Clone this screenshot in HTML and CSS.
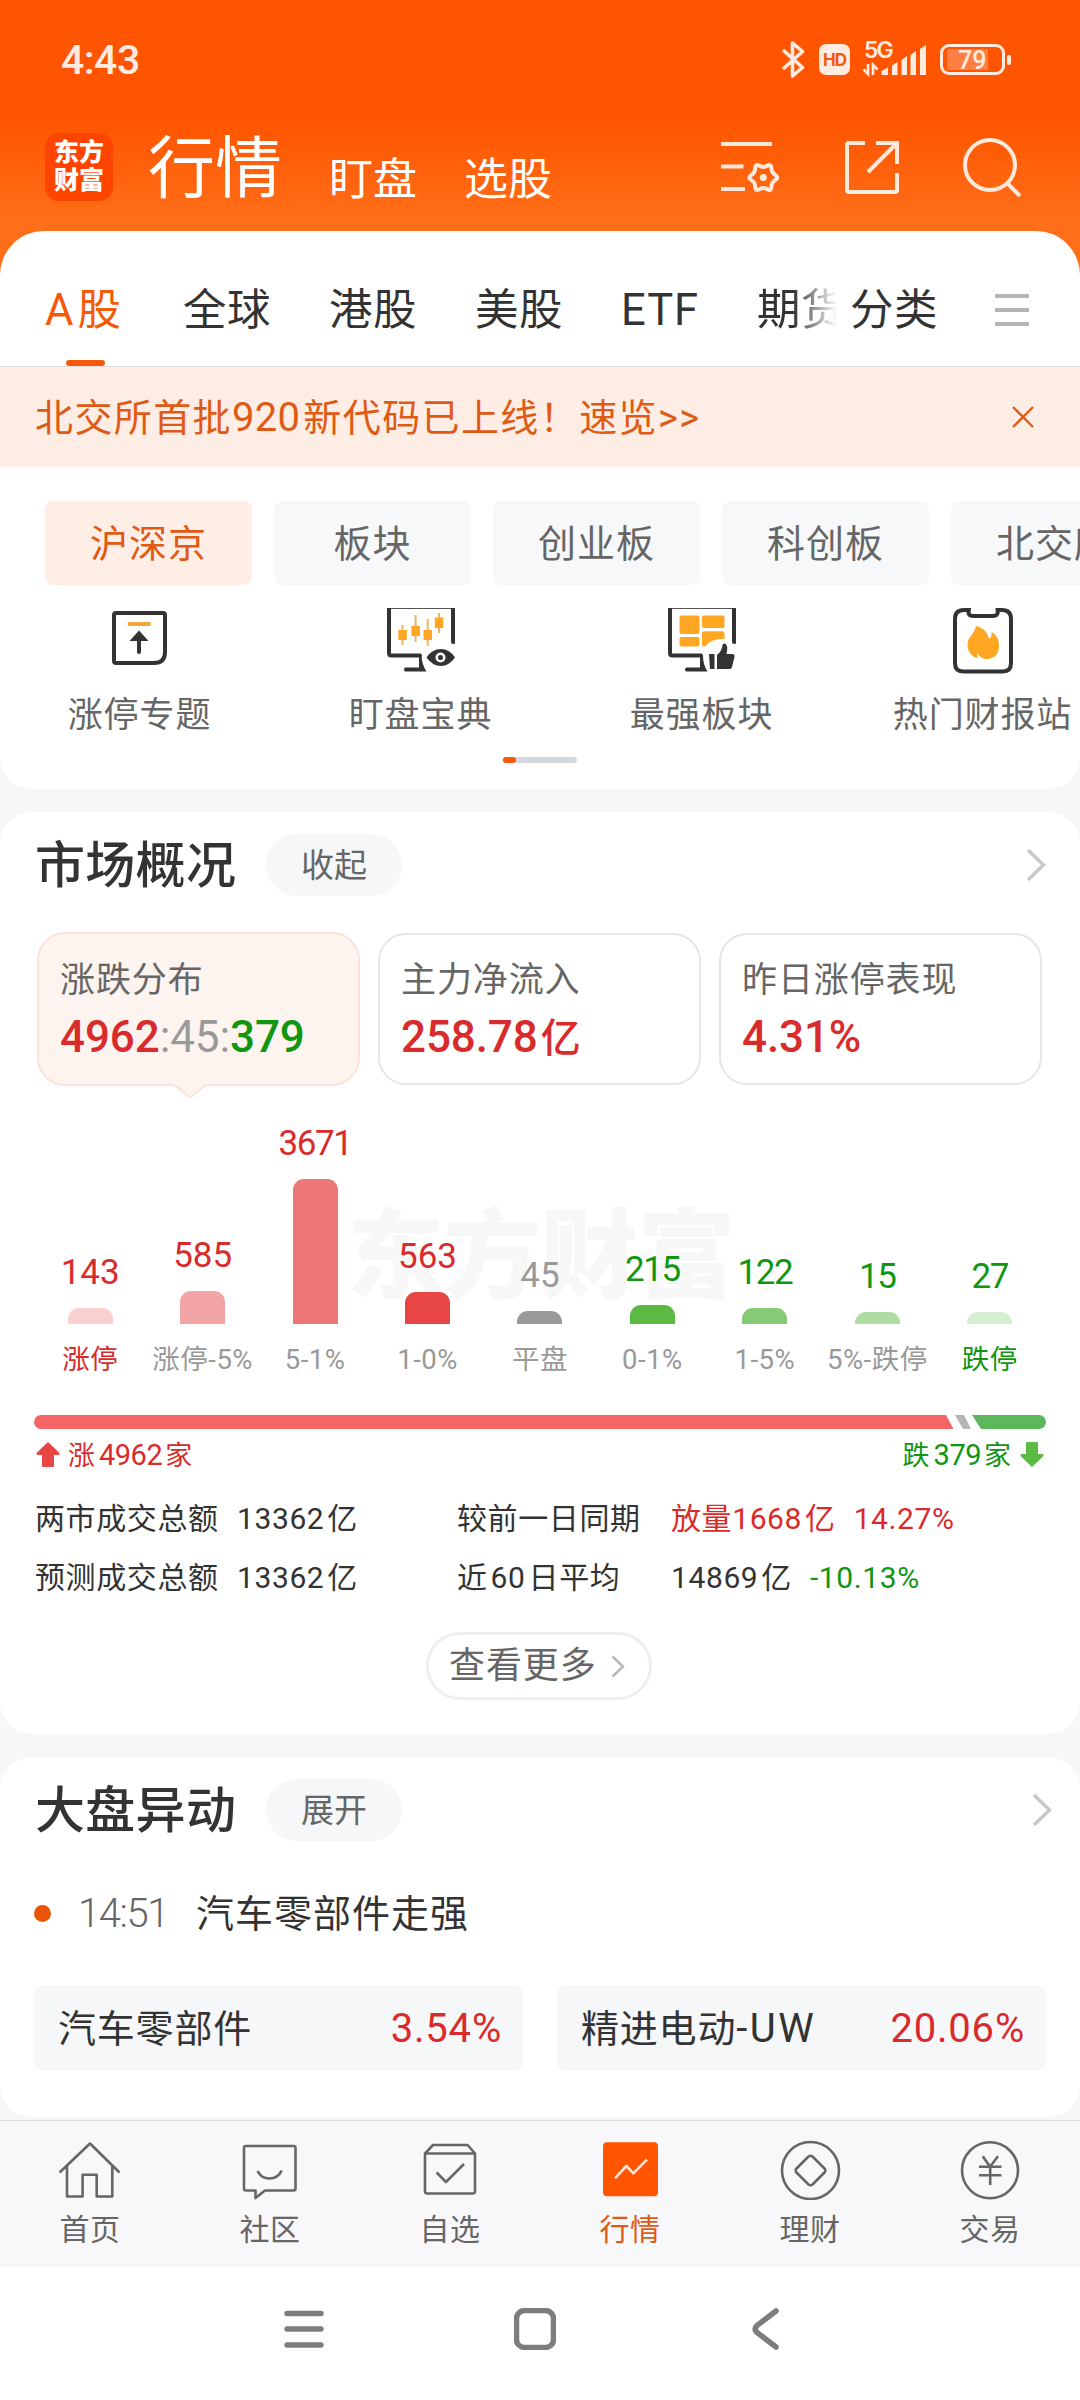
FILE: index.html
```html
<!doctype html>
<html lang="zh-CN">
<head>
    <meta charset="utf-8">
    <title>行情</title>
    <link rel="stylesheet" href="styles.css">
</head>
<body>

<header class="top">
    <div class="status-bar">
        <span class="clock">4:43</span>
        <svg class="bluetooth" width="24" height="39" viewBox="0 0 24 39"><path d="M2 10L21.500 27.500L11.500 36V3L21.500 11.500L2 29"/></svg>
        <span class="hd">HD</span>
        <svg class="signal" width="64" height="40" viewBox="0 -4 64 40">
            <text x="1" y="17">5G</text>
            <path d="M18.500 34V30L25 26.500V34ZM29 34V24.500L34.500 21V34ZM38.500 34V19L44 15V34ZM47.500 34V14L53 10V34ZM57 34V8L63 4V34Z"/>
            <path class="data" d="M5 23V33L0.500 28.500M10 34V24L14.500 28.500"/>
        </svg>
        <span class="battery"><i></i><b>79</b></span>
        <span class="battery-tip"></span>
    </div>
    <div class="title-bar">
        <div class="logo">东方<br>财富</div>
        <span class="title-main">行情</span>
        <span class="title-sub">盯盘</span>
        <span class="title-sub">选股</span>
        <div class="title-icons">
            <svg width="60" height="58" viewBox="0 0 60 58">
                <path d="M0 5H51M0 27.500H22.500M0 50H24"/>
                <g transform="translate(42.3 38.500)">
                    <path d="M12.100 2.400Q8.200 4.750 8.100 9.300Q8 13.900 4 11.700Q0 9.500 -4 11.700Q-8 13.900 -8.100 9.300Q-8.200 4.750 -12.100 2.400Q-16 0 -12.100 -2.400Q-8.200 -4.750 -8.100 -9.300Q-8 -13.900 -4 -11.700Q0 -9.500 4 -11.700Q8 -13.900 8.100 -9.300Q8.200 -4.750 12.100 -2.400Q16 0 12.100 2.400Z"/>
                    <circle class="dot" r="3.500"/>
                </g>
            </svg>
            <svg width="54" height="54" viewBox="0 0 54 54"><path d="M20 2H4Q2 2 2 4V49Q2 51 4 51H50Q52 51 52 49V32M31 2H52V23M51 3L23 31"/></svg>
            <svg width="60" height="60" viewBox="0 0 60 60"><circle cx="27" cy="27" r="25"/><path d="M44 45L57 58"/></svg>
        </div>
    </div>
</header>

<section class="card card-first">
    <nav class="tabs">
        <span class="tab active">A股</span>
        <span class="tab">全球</span>
        <span class="tab">港股</span>
        <span class="tab">美股</span>
        <span class="tab tab-etf">ETF</span>
        <span class="tab tab-fade">期货</span>
        <span class="tab tab-sort">分类</span>
        <span class="tabs-menu"><i></i><i></i><i></i></span>
    </nav>

    <div class="notice">
        <span>北交所首批<em>920</em>新代码已上线！速览&gt;&gt;</span>
        <svg width="22" height="22" viewBox="0 0 22 22"><path d="M1 1L21 21M21 1L1 21"/></svg>
    </div>

    <div class="chips">
        <span class="chip active">沪深京</span>
        <span class="chip">板块</span>
        <span class="chip">创业板</span>
        <span class="chip">科创板</span>
        <span class="chip">北交所</span>
    </div>

    <div class="shortcuts">
        <div class="shortcut">
            <svg width="55" height="66" viewBox="0 -3 55 66">
                <path class="line" d="M4 2H51Q53 2 53 4V41Q53 52 42 52H4Q2 52 2 50V4Q2 2 4 2Z"/>
                <path class="orange-line" d="M17.500 13H37"/>
                <path class="line" d="M27 26V41"/>
                <path class="solid" d="M27 19.500L36.500 30H17.500Z"/>
            </svg>
            <span>涨停专题</span>
        </div>
        <div class="shortcut">
            <svg width="68" height="66" viewBox="0 0 68 66">
                <path class="thin" d="M0 0.500H68"/>
                <path class="line" d="M2 0V45Q2 47.500 4.500 47.500H33M66 0V34"/>
                <path class="solid" d="M32 48H34.500Q35 57 39.500 63.500H18Q16 61.500 18 59.500H32ZM64 33L68 36V32Z"/>
                <path class="wick" d="M15.500 17V37M28.600 7V34M40.700 11V38M52 5V25"/>
                <path class="orange" d="M11.300 22h8.500v10h-8.500zM24.400 18h8.500v10h-8.500zM36.500 22h8.500v10h-8.500zM47.800 9.500h8.500v10.500h-8.500z"/>
                <path class="solid" d="M39.500 49.500Q45 41 53.800 41T68 49.500Q62 58 53.800 58T39.500 49.500Z"/>
                <circle cx="53.500" cy="49.500" r="5" fill="#fff"/>
                <circle cx="53.500" cy="49.500" r="2.500" class="solid"/>
            </svg>
            <span>盯盘宝典</span>
        </div>
        <div class="shortcut">
            <svg width="68" height="66" viewBox="0 0 68 66">
                <path class="thin" d="M0 0.500H68"/>
                <path class="line" d="M2 0V45Q2 47.500 4.500 47.500H33M66 0V34"/>
                <path class="solid" d="M32 48H35Q35 57 39.500 63.500H18Q16 61.500 18 59.500H32Z"/>
                <g class="orange">
                    <rect x="11.500" y="7.500" width="20" height="18.500" rx="2"/>
                    <rect x="34" y="7.500" width="22.500" height="12.500" rx="2"/>
                    <rect x="11.500" y="29" width="20" height="9.500" rx="2"/>
                    <path d="M36 23.300H54.500Q56.500 23.300 56.500 25V31Q43 30 37 38.500H36Q34 38.500 34 36.500V25.500Q34 23.300 36 23.300Z"/>
                </g>
                <path class="solid" d="M41 46H46.500V61H42ZM49 47Q54 43 54.500 37Q55 35 57 35.500Q60.500 37 58.500 46H64Q67 46 66.500 49L64 59Q63.500 61 62 61H49ZM64 33L68 36V32Z"/>
            </svg>
            <span>最强板块</span>
        </div>
        <div class="shortcut">
            <svg width="60" height="66" viewBox="0 0 60 66">
                <path class="line" d="M16 1Q14 8 20 8H40Q46 8 44.500 1M16 2H11Q2 2 2 11V55Q2 63.500 10 63.500H50Q58 63.500 58 55V11Q58 2 49 2H44.500"/>
                <path class="orange" d="M23 18C32 20 35 26 36 31C38 30 39 28 38.500 24C44 27 46 32 46 38C46 46 41 51 34 51C30 51 26 49 25 45C24 47 24 49 24.500 50.500C18 48 14.500 43 14.500 37C14.500 28 22 26 23 18Z"/>
            </svg>
            <span>热门财报站</span>
        </div>
    </div>
    <div class="pager"><i></i></div>
</section>

<section class="card card-market">
    <div class="card-head">
        <h2>市场概况</h2>
        <span class="pill">收起</span>
        <svg class="more" width="20" height="34" viewBox="0 0 20 34"><path d="M2 2L17.500 17L2 32"/></svg>
    </div>

    <div class="boxes">
        <div class="box active">
            <span class="box-label">涨跌分布</span>
            <span class="box-value"><span class="red">4962</span><span class="flat">:45:</span><span class="green">379</span></span>
            <svg class="pointer" width="38" height="15" viewBox="0 0 38 15"><path d="M0 0H38V2Q34 2 31 5L21.500 13Q19 15 16.500 13L7 5Q4 2 0 2Z" fill="#f9e3d8"/><path d="M1 0H37Q33 0 30 3L20.500 11.500Q19 13 17.500 11.500L8 3Q5 0 1 0Z" fill="#fef4ef"/></svg>
        </div>
        <div class="box">
            <span class="box-label">主力净流入</span>
            <span class="box-value red">258.78<em>亿</em></span>
        </div>
        <div class="box">
            <span class="box-label">昨日涨停表现</span>
            <span class="box-value red">4.31%</span>
        </div>
    </div>

    <div class="chart">
        <div class="watermark">东方财富</div>
        <div class="col"><b class="red">143</b><i class="bar bar-1" style="height:16px"></i><span class="red">涨停</span></div>
        <div class="col"><b class="red">585</b><i class="bar bar-2" style="height:33px"></i><span>涨停-5%</span></div>
        <div class="col"><b class="red tight">3671</b><i class="bar bar-3" style="height:145px"></i><span>5-1%</span></div>
        <div class="col"><b class="red">563</b><i class="bar bar-4" style="height:32px"></i><span>1-0%</span></div>
        <div class="col"><b class="flat">45</b><i class="bar bar-5" style="height:13px"></i><span>平盘</span></div>
        <div class="col"><b class="green tight">215</b><i class="bar bar-6" style="height:19px"></i><span>0-1%</span></div>
        <div class="col"><b class="green tight">122</b><i class="bar bar-7" style="height:16px"></i><span>1-5%</span></div>
        <div class="col"><b class="green tight">15</b><i class="bar bar-8" style="height:12px"></i><span>5%-跌停</span></div>
        <div class="col"><b class="green tight">27</b><i class="bar bar-9" style="height:12px"></i><span class="green">跌停</span></div>
    </div>

    <svg class="ratio" width="1012" height="14" viewBox="0 0 1012 14">
        <path d="M7 0H912L919.500 14H7A7 7 0 0 1 7 0Z" fill="#f66565"/>
        <path d="M921 0H930L937 14H929Z" fill="#b5b5b5"/>
        <path d="M938 0H1005A7 7 0 0 1 1005 14H947Z" fill="#5cb85c"/>
    </svg>
    <div class="ratio-text">
        <svg width="24" height="26" viewBox="0 0 24 26"><path d="M12 0L23.500 11Q24 13 22 13H18V24Q18 25 17 25H7Q6 25 6 24V13H2Q0 13 0.500 11Z" fill="#e84545"/></svg>
        <span class="red">涨<em>4962</em>家</span>
        <span class="green fall">跌<em>379</em>家</span>
        <svg width="24" height="26" viewBox="0 0 24 26"><path d="M12 25L23.500 14Q24 12 22 12H18V1Q18 0 17 0H7Q6 0 6 1V12H2Q0 12 0.500 14Z" fill="#5cb944"/></svg>
    </div>

    <div class="stats">
        <span>两市成交总额</span><span>13362<em>亿</em></span><span>较前一日同期</span>
        <span class="red">放量1668<em>亿</em><b>14.27%</b></span>
        <span>预测成交总额</span><span>13362<em>亿</em></span><span>近<em>60</em><em>日平均</em></span>
        <span>14869<em>亿</em><b class="green">-10.13%</b></span>
    </div>

    <div class="view-more">
        <span>查看更多</span>
        <svg width="14" height="23" viewBox="0 0 14 23"><path d="M1.500 1.500L12 11.500L1.500 21.500"/></svg>
    </div>
</section>

<section class="card card-moves">
    <div class="card-head">
        <h2>大盘异动</h2>
        <span class="pill">展开</span>
        <svg class="more" width="20" height="34" viewBox="0 0 20 34"><path d="M2 2L17.500 17L2 32"/></svg>
    </div>
    <div class="event">
        <i></i>
        <span class="event-time">14:51</span>
        <span>汽车零部件走强</span>
    </div>
    <div class="stocks">
        <div class="stock"><span>汽车零部件</span><b>3.54%</b></div>
        <div class="stock"><span>精进电动<em>-UW</em></span><b>20.06%</b></div>
    </div>
</section>

<nav class="bottom-nav">
    <div class="nav-item">
        <svg width="64" height="60" viewBox="0 0 64 60"><path d="M1.600 32.500L32 3.500L61.500 32.500M9 26.500V56.500H24.600V34.700H38.700V56.500H54.300V26.500"/></svg>
        <span>首页</span>
    </div>
    <div class="nav-item">
        <svg width="64" height="60" viewBox="0 0 64 60"><path d="M8 6H55.500Q57.500 6 57.500 8V48.500Q57.500 50.500 55.500 50.500H27L17.500 58V50.500H8Q6 50.500 6 48.500V8Q6 6 8 6Z"/><path d="M19.600 31Q23 38.500 31.500 38.500T43.700 30.500"/></svg>
        <span>社区</span>
    </div>
    <div class="nav-item">
        <svg width="64" height="60" viewBox="0 0 64 60"><path d="M7 13.500L15 5H49.600L57 13.500V51Q57 53.500 54.500 53.500H9.500Q7 53.500 7 51ZM7 13.500H57M18.600 32.500L28 42L46 24"/></svg>
        <span>自选</span>
    </div>
    <div class="nav-item active">
        <svg width="64" height="60" viewBox="0 0 64 60"><rect x="5" y="2.300" width="55" height="54" rx="4"/><path d="M17 38.300L28.400 26L35.300 33.300L49 19.700"/></svg>
        <span>行情</span>
    </div>
    <div class="nav-item">
        <svg width="64" height="60" viewBox="0 0 64 60"><circle cx="32.500" cy="30.500" r="28.500"/><path d="M34.500 16.500L47 29Q48 30.500 47 32L34.500 44.500Q32.500 46 30.500 44.500L18 32Q17 30.500 18 29L30.500 16.500Q32.500 15 34.500 16.500Z"/></svg>
        <span>理财</span>
    </div>
    <div class="nav-item">
        <svg width="64" height="60" viewBox="0 0 64 60"><circle cx="32" cy="30.300" r="28"/><path d="M24.800 16.300L32 26.700L40 16.300M21 26.700H43.500M21 35.300H43.500M32.200 26.700V45"/></svg>
        <span>交易</span>
    </div>
</nav>

<div class="system-nav">
    <svg width="40" height="42" viewBox="0 0 40 42"><path d="M3 5.500H37M3 21H37M3 37H37"/></svg>
    <svg width="42" height="42" viewBox="0 0 42 42"><rect x="2.500" y="2.500" width="37" height="37" rx="8"/></svg>
    <svg width="28" height="42" viewBox="0 0 28 42"><path d="M24 3L5 17.500Q1.500 21 5 24.500L24 39"/></svg>
</div>

</body>
</html>
```

FILE: styles.css
```css
* {
    box-sizing: border-box;
}

body {
    margin: 0;
    width: 1080px;
    height: 2400px;
    overflow: hidden;
    font-family: Roboto, "Noto Sans CJK SC", sans-serif;
    background-color: #f6f7f9;
    color: #333333;
    line-height: 1;
    white-space: nowrap;
}

em, i {
    font-style: normal;
}

b {
    font-weight: normal;
}

svg {
    display: block;
    flex: none;
}

.red { color: #d92b2b; }
.green { color: #109610; }
.flat { color: #999999; }

/* Orange header */
.top {
    height: 275px;
    background: linear-gradient(#ff5500 120px, #ff6f1a 225px);
}

.status-bar {
    display: flex;
    align-items: center;
    height: 119px;
    padding-left: 61px;
    color: #ffebe0;
}

.clock {
    width: 720px;
    padding-top: 2px;
    font-size: 41px;
    font-weight: 500;
    letter-spacing: -0.5px;
}

.bluetooth path {
    fill: none;
    stroke: #ffebe0;
    stroke-width: 3.6;
    stroke-linejoin: round;
}

.hd {
    width: 31px;
    height: 31px;
    margin-left: 14px;
    border-radius: 7px;
    background-color: #ffebe0;
    color: #f25a10;
    font: 700 17px/32px Inter, sans-serif;
    letter-spacing: -1px;
    text-align: center;
}

.signal {
    margin-left: 13px;
    margin-top: -5px;
    fill: #ffebe0;
}

.signal text {
    font: 600 23px Inter, sans-serif;
    letter-spacing: -2px;
}

.signal .data {
    fill: none;
    stroke: #ffebe0;
    stroke-width: 2.6;
}

.battery {
    display: flex;
    width: 65px;
    height: 31px;
    margin-left: 13px;
    padding: 2px 4px;
    border: 3px solid #ffebe0;
    border-radius: 9px;
}

.battery i {
    width: 41px;
    background-color: #ff7f42;
    border-radius: 2px 0 0 2px;
}

.battery b {
    margin-left: -30px;
    font: 500 25px/23px Roboto, sans-serif;
}

.battery-tip {
    width: 4px;
    height: 10px;
    margin-left: 2px;
    border-radius: 2px;
    background-color: #ffebe0;
}

.title-bar {
    display: flex;
    height: 112px;
    padding-left: 45px;
    color: #ffffff;
}

.logo {
    width: 68px;
    height: 68px;
    margin-top: 14px;
    border-radius: 14px;
    background-color: #ff4400;
    font-size: 25px;
    font-weight: 900;
    line-height: 28px;
    padding-top: 6px;
    text-align: center;
}

.title-main {
    margin-left: 35px;
    font-size: 67px;
    line-height: 66px;
    margin-top: 17px;
}

.title-sub {
    margin-left: 47px;
    font-size: 44px;
    line-height: 44px;
    margin-top: 39px;
}

.title-icons {
    display: flex;
    align-items: center;
    gap: 64px;
    height: 60px;
    margin: 19px 0 0 169px;
}

.title-icons svg {
    fill: none;
    stroke: #ffe9dc;
    stroke-width: 4;
}

.title-icons .dot {
    fill: #ffe9dc;
    stroke: none;
}

/* Cards */
.card {
    background-color: #ffffff;
    border-radius: 32px;
    overflow: hidden;
}

.card-first {
    height: 558px;
    margin-top: -44px;
    border-radius: 44px 44px 32px 32px;
}

.tabs {
    display: flex;
    align-items: center;
    height: 136px;
    padding: 22px 0 0 45px;
    border-bottom: 1px solid #dddddd;
    font-size: 43.5px;
}

.tab {
    display: flex;
    align-items: center;
    height: 113px;
    margin-right: 58px;
    padding-top: 3px;
    letter-spacing: 0.5px;
}

.tab.active {
    position: relative;
    width: 80px;
    letter-spacing: 4px;
    color: #f5590a;
}

.tab.active::after {
    content: "";
    position: absolute;
    left: 21px;
    bottom: 0;
    width: 39px;
    height: 6px;
    border-radius: 3px;
    background-color: #f5590a;
}

.tab-etf {
    width: 78px;
    letter-spacing: 1px;
}

.tab-fade {
    width: 80px;
    margin-right: 13px;
    overflow: hidden;
    -webkit-mask-image: linear-gradient(90deg, #000 45%, transparent);
    mask-image: linear-gradient(90deg, #000 45%, transparent);
}

.tab-sort {
    margin-right: 57px;
}

.tabs-menu {
    display: grid;
    gap: 10px;
}

.tabs-menu i {
    width: 34px;
    height: 4px;
    border-radius: 1px;
    background-color: #b4b4b4;
}

.notice {
    display: flex;
    align-items: center;
    justify-content: space-between;
    height: 100px;
    padding: 0 46px 0 35px;
    background-color: #fdede4;
    color: #df5a14;
    font-size: 38px;
    letter-spacing: 1.4px;
}

.notice span {
    padding-top: 2px;
}

.notice em {
    margin-right: 3px;
    font-size: 40px;
    letter-spacing: 0.3px;
}

.notice svg {
    fill: none;
    stroke: #df5a14;
    stroke-width: 2.4;
}

.chips {
    display: flex;
    gap: 22px;
    padding: 34px 0 0 45px;
}

.chip {
    flex: none;
    width: 207px;
    height: 84px;
    border-radius: 8px;
    background-color: #f7f8fa;
    color: #666666;
    font-size: 38px;
    line-height: 86px;
    letter-spacing: 1px;
    text-align: center;
}

.chip:nth-child(2) {
    width: 197px;
}

.chip.active {
    background-color: #ffeee6;
    color: #df5a14;
}

.shortcuts {
    display: grid;
    grid-template-columns: repeat(4, 281px);
    width: 1124px;
    margin: 23px 0 0 -1px;
}

.shortcut {
    display: grid;
    justify-items: center;
    row-gap: 24px;
    color: #666666;
    font-size: 35px;
    line-height: 36px;
    letter-spacing: 0.9px;
}

.shortcut .line {
    fill: none;
    stroke: #333333;
    stroke-width: 4;
    stroke-linecap: round;
}

.shortcut .thin {
    stroke: #555555;
    stroke-width: 1;
}

.shortcut .solid { fill: #333333; }
.shortcut .orange { fill: #ffa622; }

.shortcut .orange-line {
    stroke: #f5a638;
    stroke-width: 4;
    stroke-linecap: round;
}

.shortcut .wick {
    stroke: #f3b35c;
    stroke-width: 2;
}

.pager {
    width: 74px;
    height: 6px;
    margin: 23px 0 0 503px;
    border-radius: 3px;
    background-color: #d5d9dc;
}

.pager i {
    display: block;
    width: 13px;
    height: 6px;
    border-radius: 3px;
    background-color: #f5590a;
}

/* Card headings */
.card-head {
    display: flex;
    align-items: center;
    height: 106px;
    padding: 0 34px 0 35px;
}

.card-head h2 {
    width: 231px;
    margin: 0;
    padding-top: 2px;
    font-size: 50px;
    font-weight: 500;
    letter-spacing: 0.3px;
}

.pill {
    width: 136px;
    height: 62px;
    border-radius: 31px;
    background-color: #f6f7f9;
    color: #666666;
    font-size: 33px;
    line-height: 63px;
    text-align: center;
}

.more {
    margin-left: auto;
    fill: none;
    stroke: #c8c8c8;
    stroke-width: 3.5;
}

/* Market overview */
.card-market {
    height: 922px;
    margin-top: 23px;
}

.boxes {
    display: grid;
    grid-template-columns: 323px 323px 323px;
    gap: 18px;
    padding: 14px 0 0 37px;
}

.box {
    position: relative;
    display: flex;
    flex-direction: column;
    height: 152px;
    margin-top: 1px;
    padding: 28px 0 0 21px;
    border: 2px solid #e6e6e6;
    border-radius: 28px;
}

.box.active {
    height: 154px;
    margin-top: 0;
    padding-top: 29px;
    border-color: #f9e3d8;
    background-color: #fef4ef;
}

.box-label {
    color: #666666;
    font-size: 35px;
    line-height: 36px;
    letter-spacing: 0.9px;
}

.box-value {
    margin-top: 16px;
    font-size: 44px;
    font-weight: 500;
    line-height: 44px;
    letter-spacing: -0.1px;
}

.box-value .flat {
    font-weight: 400;
}

.box-value em {
    margin-left: 3px;
    font-size: 40px;
}

.pointer {
    position: absolute;
    left: 132px;
    bottom: -15px;
}

.chart {
    position: relative;
    display: grid;
    grid-template-columns: repeat(9, 1fr);
    align-items: end;
    width: 1012px;
    height: 264px;
    margin: 24px 0 0 34px;
}

.watermark {
    position: absolute;
    left: 313px;
    bottom: 65px;
    font-size: 97px;
    font-weight: 900;
    line-height: 104px;
    color: #f7f7f7;
}

.col {
    position: relative;
    display: flex;
    flex-direction: column;
    align-items: center;
}

.col b {
    margin-bottom: 17px;
    font-size: 35px;
    line-height: 36px;
}

.col .tight {
    letter-spacing: -1.4px;
}

.bar {
    width: 45px;
    border-radius: 11px 11px 0 0;
}

.bar-1 { background-color: #f9d1d1; }
.bar-2 { background-color: #f3a5a5; }
.bar-3 { background-color: #ed7777; }
.bar-4 { background-color: #e84545; }
.bar-5 { background-color: #999999; }
.bar-6 { background-color: #5cb944; }
.bar-7 { background-color: #85ca75; }
.bar-8 { background-color: #aedca2; }
.bar-9 { background-color: #d6eed1; }

.col span {
    margin-top: 21px;
    font-size: 27.5px;
    line-height: 30px;
    height: 29px;
    letter-spacing: 0.5px;
    color: #999999;
}

.col span.red { color: #d92b2b; }
.col span.green { color: #109610; }

.ratio {
    margin: 41px 0 0 34px;
}

.ratio-text {
    display: flex;
    align-items: center;
    height: 30px;
    margin: 11px 36px 0;
    font-size: 27px;
}

.ratio-text span {
    margin-left: 8px;
}

.ratio-text em {
    margin: 0 3px 0 4px;
    font-size: 29px;
    letter-spacing: -0.5px;
}

.ratio-text .fall {
    margin: 0 9px 0 auto;
}

.stats {
    display: grid;
    grid-template-columns: 202px 220px 214px auto;
    row-gap: 25px;
    margin: 32px 0 0 35px;
    font-size: 30px;
    line-height: 34px;
    letter-spacing: 0.6px;
}

.stats em {
    margin-left: 3px;
}

.stats b {
    margin-left: 18px;
}

.view-more {
    display: flex;
    align-items: center;
    width: 226px;
    height: 68px;
    margin: 37px 0 0 426px;
    padding-left: 20px;
    border: 3px solid #eeeeee;
    border-radius: 34px;
    color: #666666;
    font-size: 36px;
    letter-spacing: 0.9px;
}

.view-more svg {
    margin-left: 14px;
    fill: none;
    stroke: #b8b8b8;
    stroke-width: 2.5;
}

/* Market moves */
.card-moves {
    height: 360px;
    margin-top: 23px;
}

.card-moves .card-head {
    padding-right: 28px;
}

.event {
    display: flex;
    align-items: center;
    height: 40px;
    margin: 30px 0 0 34px;
    font-size: 38px;
    letter-spacing: 1px;
}

.event span {
    padding-top: 2px;
}

.event i {
    width: 17px;
    height: 17px;
    border-radius: 50%;
    background-color: #e95504;
}

.event-time {
    width: 118px;
    margin-left: 27px;
    color: #666666;
    font-size: 40px;
    font-weight: 300;
    letter-spacing: -1.4px;
}

.stocks {
    display: grid;
    grid-template-columns: 1fr 1fr;
    gap: 34px;
    margin: 52px 34px 0;
}

.stock {
    display: flex;
    align-items: center;
    justify-content: space-between;
    height: 86px;
    padding: 2px 21px 0 24px;
    border-radius: 9px;
    background-color: #f6f7f9;
    font-size: 38px;
    letter-spacing: 0.8px;
}

.stock em {
    font-size: 40px;
    letter-spacing: 2.5px;
}

.stock b {
    color: #d92b2b;
    font-size: 40px;
}

/* Bottom navigation */
.bottom-nav {
    display: grid;
    grid-template-columns: repeat(6, 1fr);
    height: 147px;
    margin-top: 3px;
    padding-top: 19px;
    border-top: 1px solid #dfdfe1;
    background-color: #f8f8fa;
}

.nav-item {
    display: flex;
    flex-direction: column;
    align-items: center;
    color: #666666;
    font-size: 30px;
    line-height: 34px;
    letter-spacing: 0.5px;
}

.nav-item svg {
    margin: 0 1px 13px 0;
    fill: none;
    stroke: #666666;
    stroke-width: 2.6;
    stroke-linejoin: round;
}

.nav-item.active {
    color: #df5a14;
}

.nav-item.active rect {
    fill: #ff5500;
    stroke: none;
}

.nav-item.active path {
    stroke: #ffe6d6;
}

.system-nav {
    display: flex;
    align-items: center;
    height: 133px;
    padding: 0 0 9px 284px;
    background-color: #ffffff;
}

.system-nav svg {
    margin-right: 190px;
    fill: none;
    stroke: #7d7d7d;
    stroke-width: 5.5;
    stroke-linecap: round;
}

.system-nav svg + svg {
    margin-right: 196px;
}
```
